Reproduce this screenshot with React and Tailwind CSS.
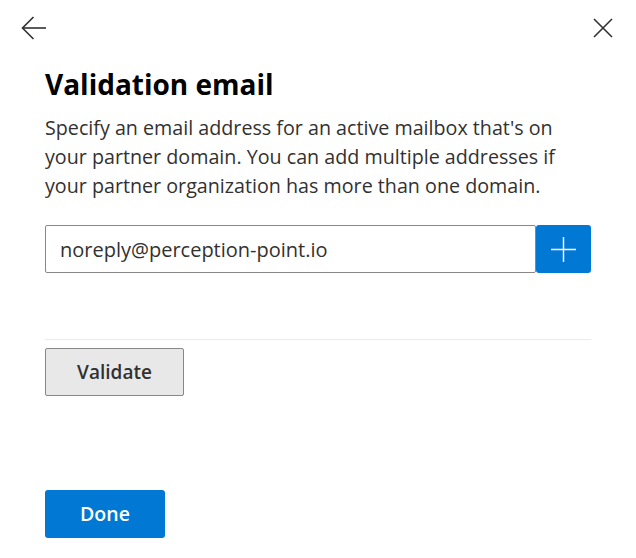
import React from 'react';

function BackArrow() {
  return (
    <svg width="26" height="24" viewBox="0 0 26 24" fill="none" stroke="#323130" strokeWidth="1.6">
      <path d="M1.5 12H25" />
      <path d="M12.5 1L1.5 12L12.5 23" />
    </svg>
  );
}

function CloseIcon() {
  return (
    <svg width="20" height="20" viewBox="0 0 20 20" fill="none" stroke="#323130" strokeWidth="1.6">
      <path d="M1 1L19 19M19 1L1 19" />
    </svg>
  );
}

export default function App() {
  return (
    <div className="w-[636px] h-[558px] bg-white flex flex-col font-['Open_Sans',sans-serif] text-[#323130]">
      <div className="flex justify-between items-start pl-[21px] pr-[23px] pt-[16px]">
        <button className="block"><BackArrow /></button>
        <button className="block mt-[2px]"><CloseIcon /></button>
      </div>

      <div className="px-[45px] flex flex-col">
        <h1 className="mt-[26px] text-[28px] leading-[36px] font-bold text-black">
          Validation email
        </h1>
        <p className="mt-[11px] w-[546px] text-[19.7px] leading-[29px]">
          Specify an email address for an active mailbox that's on your partner domain. You can add multiple addresses if your partner organization has more than one domain.
        </p>

        <div className="mt-[25px] flex w-[546px]">
          <input
            type="text"
            defaultValue="noreply@perception-point.io"
            className="flex-1 min-w-0 h-[48px] border border-[#8a8886] rounded-[2px] px-[14px] text-[20px] text-[#323130] outline-none"
          />
          <button className="w-[55px] h-[48px] bg-[#0078d4] rounded-[3px] flex items-center justify-center">
            <svg width="25" height="25" viewBox="0 0 26 26" fill="none" stroke="white" strokeWidth="1.5">
              <path d="M13 0V26M0 13H26" />
            </svg>
          </button>
        </div>

        <div className="mt-[66px] w-[546px] border-t border-[#edebe9]" />

        <button className="mt-[8px] w-[139px] h-[48px] bg-[#e8e8e8] border border-[#8a8886] rounded-[2px] text-[19px] font-semibold text-[#323130]">
          Validate
        </button>

        <button className="mt-[94px] w-[120px] h-[48px] bg-[#0078d4] rounded-[3px] text-[19.5px] font-semibold text-white">
          Done
        </button>
      </div>
    </div>
  );
}
